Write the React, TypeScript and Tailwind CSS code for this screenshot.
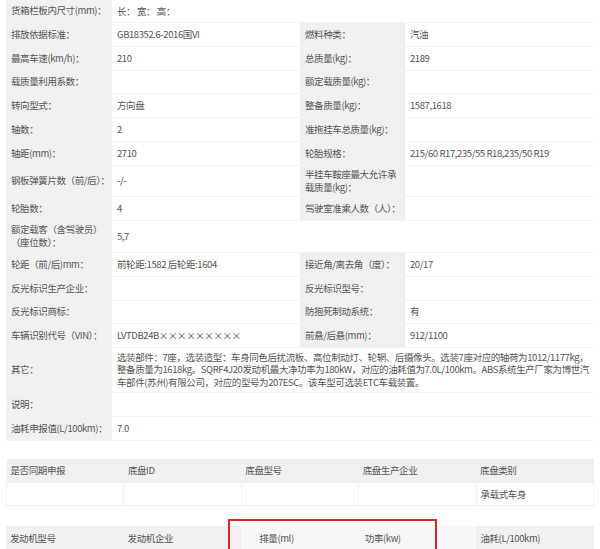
const L = 'bg-[#f0f0f0] pl-[5px] pr-[1px] text-[#555] align-middle overflow-hidden';
const V = 'bg-white px-[5px] text-[#555] align-middle overflow-hidden';

type Row = { h: number; a: string; b?: string; c?: string; d?: string; span?: boolean };

const rows: Row[] = [
  { h: 22, a: '货箱栏板内尺寸(mm)：', b: '长： 宽： 高：', span: true },
  { h: 24, a: '排放依据标准：', b: 'GB18352.6-2016国VI', c: '燃料种类：', d: '汽油' },
  { h: 24, a: '最高车速(km/h)：', b: '210', c: '总质量(kg)：', d: '2189' },
  { h: 23, a: '载质量利用系数：', b: '', c: '额定载质量(kg)：', d: '' },
  { h: 24, a: '转向型式：', b: '方向盘', c: '整备质量(kg)：', d: '1587,1618' },
  { h: 24, a: '轴数：', b: '2', c: '准拖挂车总质量(kg)：', d: '' },
  { h: 24, a: '轴距(mm)：', b: '2710', c: '轮胎规格：', d: '215/60 R17,235/55 R18,235/50 R19' },
  { h: 31, a: '钢板弹簧片数（前/后）：', b: '-/-', c: '半挂车鞍座最大允许承载质量(kg)：', d: '' },
  { h: 24, a: '轮胎数：', b: '4', c: '驾驶室准乘人数（人）：', d: '' },
  { h: 32, a: '额定载客（含驾驶员）（座位数）：', b: '5,7', span: true },
  { h: 24, a: '轮距（前/后)mm：', b: '前轮距:1582 后轮距:1604', c: '接近角/离去角（度）：', d: '20/17' },
  { h: 24, a: '反光标识生产企业：', b: '', c: '反光标识型号：', d: '' },
  { h: 23, a: '反光标识商标：', b: '', c: '防抱死制动系统：', d: '有' },
  { h: 24, a: '车辆识别代号（VIN）：', b: 'LVTDB24B×××××××××', c: '前悬/后悬(mm)：', d: '912/1100' },
  {
    h: 45,
    a: '其它：',
    b: '选装部件：7座，选装造型：车身同色后扰流板、高位制动灯、轮辋、后摄像头。选装7座对应的轴荷为1012/1177kg，整备质量为1618kg。SQRF4J20发动机最大净功率为180kW，对应的油耗值为7.0L/100km。ABS系统生产厂家为博世汽车部件(苏州)有限公司，对应的型号为207ESC。该车型可选装ETC车载装置。',
    span: true,
  },
  { h: 24, a: '说明：', b: '', span: true },
  { h: 24, a: '油耗申报值(L/100km)：', b: '7.0', span: true },
];

export default function App() {
  return (
    <div
      className="w-[600px] h-[549px] overflow-hidden bg-white px-[6px] text-[9.5px] leading-[13px] tracking-[-0.4px]"
      style={{ fontFamily: '"Noto Sans CJK SC", "Noto Sans", sans-serif' }}
    >
      <table className="w-[588px] table-fixed border-collapse">
        <colgroup>
          <col className="w-[106px]" />
          <col className="w-[188px]" />
          <col className="w-[105px]" />
          <col className="w-[189px]" />
        </colgroup>
        <tbody>
          {rows.map((r, i) => (
            <tr key={i} style={{ height: r.h }} className="border-b border-[#f4f4f4]">
              <td className={L}>{r.a}</td>
              {r.span ? (
                <td className={V} colSpan={3}>
                  <div className="leading-[12.5px]">{r.b}</div>
                </td>
              ) : (
                <>
                  <td className={V}>{r.b}</td>
                  <td className={L}>{r.c}</td>
                  <td className={V}>{r.d}</td>
                </>
              )}
            </tr>
          ))}
        </tbody>
      </table>

      <table className="mt-[18px] w-[588px] table-fixed border-collapse">
        <tbody>
          <tr className="h-[24px] bg-[#f0f0f0]">
            {['是否同期申报', '底盘ID', '底盘型号', '底盘生产企业', '底盘类别'].map((t) => (
              <td key={t} className="px-[4px] text-[#555]">{t}</td>
            ))}
          </tr>
          <tr className="h-[23px]">
            {['', '', '', '', '承载式车身'].map((t, i) => (
              <td key={i} className="border border-[#f0f0f0] px-[4px] text-[#555]">{t}</td>
            ))}
          </tr>
        </tbody>
      </table>

      <div className="relative mt-[20px]">
        <table className="w-[588px] table-fixed border-collapse">
          <tbody>
            <tr className="h-[24px]">
              <td className="bg-[#f0f0f0] px-[4px] text-[#555]">发动机型号</td>
              <td className="bg-[#f0f0f0] px-[4px] text-[#555]">发动机企业</td>
              <td className="bg-[#f7f7f7] px-[18px] text-[#555]">排量(ml)</td>
              <td className="bg-[#f7f7f7] px-[6px] text-[#555]">功率(kw)</td>
              <td className="bg-[#f0f0f0] px-[4px] text-[#555]">油耗(L/100km)</td>
            </tr>
          </tbody>
        </table>
        <div className="absolute left-[222px] top-[-7px] h-[40px] w-[209px] border-2 border-[#d9272e]" />
      </div>
    </div>
  );
}
